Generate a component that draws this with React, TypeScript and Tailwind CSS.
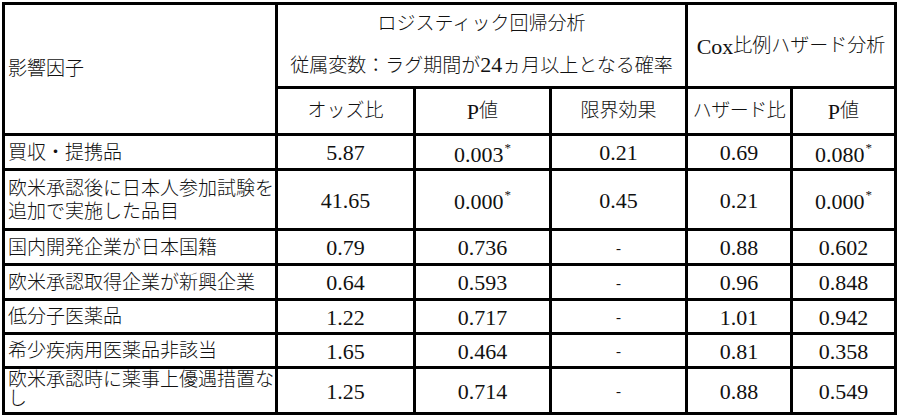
import React from "react";

const cjk = "font-['Liberation_Serif','Noto_Sans_CJK_JP',serif]";

function Num({ v, star }: { v: string; star?: boolean }) {
  return (
    <span className="text-[22px] leading-none font-normal">
      {v}
      {star && <span className="text-[13px] align-[10px] ml-[1px]">*</span>}
    </span>
  );
}

const rows: { label: React.ReactNode; cells: [string, string, string, string, string]; stars?: [boolean, boolean]; lh?: string }[] = [
  { label: "買収・提携品", cells: ["5.87", "0.003", "0.21", "0.69", "0.080"], stars: [true, true] },
  {
    label: (
      <>
        欧米承認後に日本人参加試験を
        <br />
        追加で実施した品目
      </>
    ),
    cells: ["41.65", "0.000", "0.45", "0.21", "0.000"],
    stars: [true, true],
    lh: "leading-[23px]",
  },
  { label: "国内開発企業が日本国籍", cells: ["0.79", "0.736", "-", "0.88", "0.602"] },
  { label: "欧米承認取得企業が新興企業", cells: ["0.64", "0.593", "-", "0.96", "0.848"] },
  { label: "低分子医薬品", cells: ["1.22", "0.717", "-", "1.01", "0.942"] },
  { label: "希少疾病用医薬品非該当", cells: ["1.65", "0.464", "-", "0.81", "0.358"] },
  {
    label: (
      <>
        欧米承認時に薬事上優遇措置な
        <br />し
      </>
    ),
    cells: ["1.25", "0.714", "-", "0.88", "0.549"],
    lh: "leading-[19px] pb-[3px]",
  },
];

export default function App() {
  return (
    <div className={`bg-white w-[900px] h-[420px] pt-[2px] pl-[2px] text-[#111] font-light ${cjk}`}>
      <div className="grid w-fit grid-cols-[270px_135px_133px_133px_102px_101px] grid-rows-[81px_44px_32px_57px_32px_32px_31px_31px_43px] gap-[3px] p-[3px] bg-black">
        <div className="row-span-2 bg-white flex items-center pl-[3px] text-[19px]">影響因子</div>
        <div className="col-span-3 bg-white flex flex-col items-center justify-center text-[19px] leading-none gap-[21px] pb-[2px]">
          <div>ロジスティック回帰分析</div>
          <div>
            従属変数：ラグ期間が<span className="text-[22px] font-normal">24</span>ヵ月以上となる確率
          </div>
        </div>
        <div className="col-span-2 bg-white flex items-center justify-center text-[19px] pt-[2px]">
          <span className="text-[22px] font-normal">Cox</span>比例ハザード分析
        </div>
        <div className="bg-white flex items-center justify-center text-[19px]">オッズ比</div>
        <div className="bg-white flex items-center justify-center text-[19px]">
          <span className="text-[22px] font-normal">P</span>値
        </div>
        <div className="bg-white flex items-center justify-center text-[19px]">限界効果</div>
        <div className="bg-white flex items-center justify-center text-[19px] tracking-[-0.5px]">ハザード比</div>
        <div className="bg-white flex items-center justify-center text-[19px]">
          <span className="text-[22px] font-normal">P</span>値
        </div>
        {rows.map((r, i) => (
          <React.Fragment key={i}>
            <div className={`bg-white flex items-center pl-[3px] text-[19px] ${r.lh ?? "leading-none"}`}>
              <div>{r.label}</div>
            </div>
            {r.cells.map((c, j) => (
              <div key={j} className="bg-white flex items-center justify-center pt-[2px]">
                {c === "-" ? (
                  <span className="text-[15px]">-</span>
                ) : (
                  <Num v={c} star={(j === 1 && r.stars?.[0]) || (j === 4 && r.stars?.[1])} />
                )}
              </div>
            ))}
          </React.Fragment>
        ))}
      </div>
    </div>
  );
}
